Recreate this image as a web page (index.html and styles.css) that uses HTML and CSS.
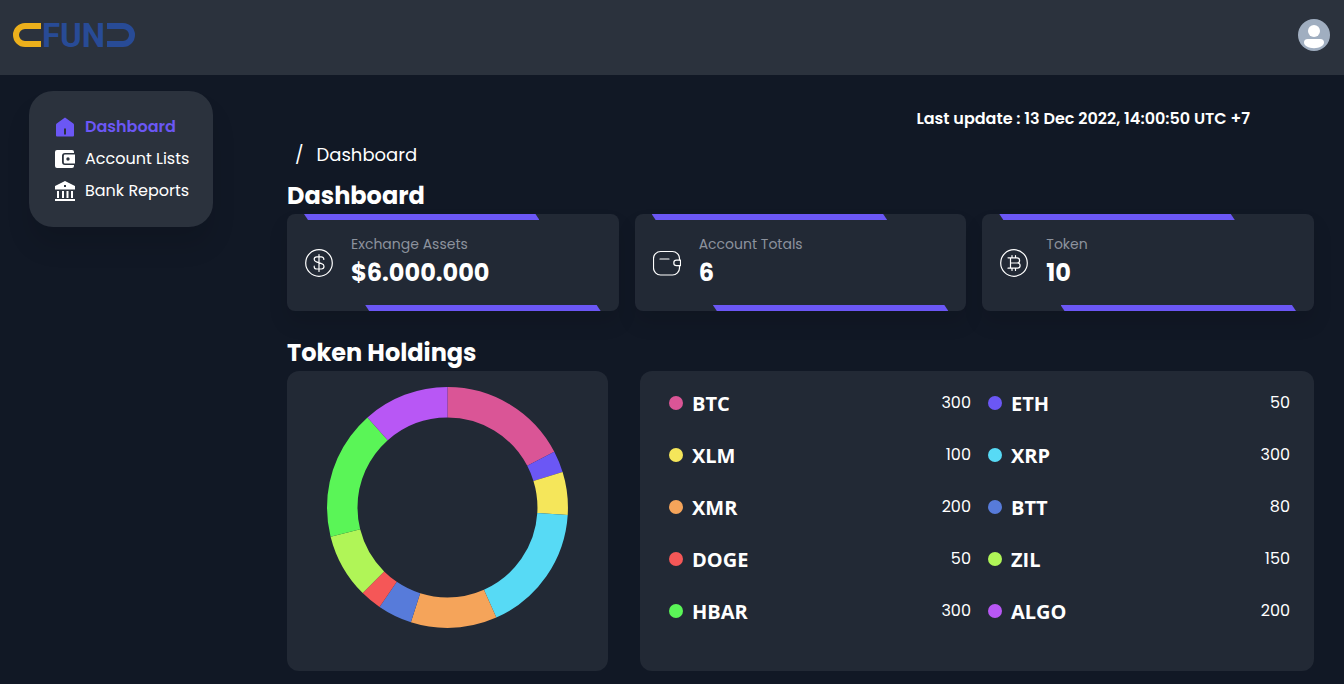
FILE: index.html
```html
<!DOCTYPE html>
<html lang="en">
<head>
<meta charset="utf-8">
<meta name="viewport" content="width=device-width, initial-scale=1">
<title>Dashboard</title>
<link rel="stylesheet" href="styles.css">
</head>
<body>
<header class="topbar">
  <a class="brand" href="#" aria-label="CFUND home">
    <svg class="logo" width="124" height="32" viewBox="0 -4 124 36">
      <path d="M28 9H12a9 9 0 0 0 0 18h16" transform="translate(0 -4)" fill="none" stroke="#ecb01c" stroke-width="6"/>
      <text class="brand-text" x="29" y="26">FUN</text>
      <path d="M94 5h16a9 9 0 0 1 0 18H94" fill="none" stroke="#284b96" stroke-width="6"/>
    </svg>
  </a>
  <button class="avatar" type="button" aria-label="Account">
    <svg width="32" height="32" viewBox="0 0 32 32">
      <circle cx="16" cy="16" r="16" fill="#a0aec0"/>
      <circle cx="16" cy="11.9" r="6" fill="#fff"/>
      <path d="M9.600 20h12.800a3.600 3.600 0 0 1 3.600 3.600c0 3.200-4.500 5.600-10 5.600S6 26.800 6 23.600A3.600 3.600 0 0 1 9.600 20z" fill="#fff"/>
    </svg>
  </button>
</header>
<div class="layout">
  <nav class="sidebar" aria-label="Main">
    <a class="nav-link active" href="#">
      <svg width="20" height="20" viewBox="0 0 20 20"><path fill="currentColor" fill-rule="evenodd" d="M10 .5 18.300 6.600Q19 7.100 19 8v10.500a1 1 0 0 1-1 1H2a1 1 0 0 1-1-1V8q0-.900.700-1.400zM9 11.500v6h2v-6z"/></svg>
      Dashboard
    </a>
    <a class="nav-link" href="#">
      <svg width="20" height="20" viewBox="0 0 20 20"><path fill="currentColor" d="M2 1h15a2 2 0 0 1 2 2v1h-9A3 3 0 0 0 7 7v6a3 3 0 0 0 3 3h9v1a2 2 0 0 1-2 2H2a2 2 0 0 1-2-2V3a2 2 0 0 1 2-2z"/><path fill="currentColor" fill-rule="evenodd" d="M10 5.500h10v9H10a1.200 1.200 0 0 1-1.200-1.200V6.700A1.200 1.200 0 0 1 10 5.500zM13 8.300a1.700 1.700 0 1 0 0 3.400 1.700 1.700 0 0 0 0-3.400z"/></svg>
      Account Lists
    </a>
    <a class="nav-link" href="#">
      <svg width="20" height="20" viewBox="0 0 20 20"><path fill="currentColor" fill-rule="evenodd" d="M10 0l10 5v3.500H0V5zM9 4v2h2V4zM2 10h2v7H2zM7 10h2v7H7zM11.500 10h2v7h-2zM16 10h2v7h-2zM0 18h20v2H0z"/></svg>
      Bank Reports
    </a>
  </nav>
  <main class="main">
    <p class="updated">Last update : 13 Dec 2022, 14:00:50 UTC +7</p>
    <nav class="breadcrumb" aria-label="Breadcrumb"><span>/</span><a href="#">Dashboard</a></nav>
    <h1 class="title">Dashboard</h1>
    <section class="stats">
      <article class="stat">
        <svg class="stat-icon" width="28" height="28" viewBox="0 0 28 28">
          <circle cx="14" cy="14" r="13.300"/>
          <path d="M14 5.500v17M18.800 10.500V10c0-1.400-1.100-2.200-2.500-2.200h-4.600c-1.400 0-2.500 1-2.500 2.500s.900 2.300 2.200 2.600l5.200 1.700c1.400.400 2.400 1.200 2.400 2.700s-1.100 2.700-2.500 2.700h-4.800c-1.400 0-2.500-.800-2.500-2.300v-.5"/>
        </svg>
        <div><h2 class="stat-label">Exchange Assets</h2><p class="stat-value">$6.000.000</p></div>
      </article>
      <article class="stat">
        <svg class="stat-icon" width="28" height="28" viewBox="0 0 28 28">
          <path d="M26.500 11V9.500a7 7 0 0 0-7-7H7.500a7 7 0 0 0-7 7V19a7 7 0 0 0 7 7h12a7 7 0 0 0 7-7v-2.500M7 10H16"/>
          <path d="M27.500 11.200H23.500a2.700 2.700 0 0 0 0 5.400h4z"/>
        </svg>
        <div><h2 class="stat-label">Account Totals</h2><p class="stat-value">6</p></div>
      </article>
      <article class="stat">
        <svg class="stat-icon" width="28" height="28" viewBox="0 0 28 28">
          <circle cx="14" cy="14" r="13.300"/>
          <path d="M8 8.800h9a2.600 2.600 0 0 1 0 5.200H10.500M17 14h.5a2.600 2.600 0 0 1 0 5.200H8M10.500 8.800v10.400M12 6.500v2.300M15.500 6.500v2.300M12 19.200v2.300M15.500 19.200v2.300"/>
        </svg>
        <div><h2 class="stat-label">Token</h2><p class="stat-value">10</p></div>
      </article>
    </section>
    <h2 class="title holdings-title">Token Holdings</h2>
    <section class="holdings">
      <div class="panel chart">
        <svg class="donut" viewBox="0 0 241 241" role="img" aria-label="Token holdings by amount">
          <g transform="rotate(-90 120.5 120.5)">
            <circle class="pink" cx="120.5" cy="120.5" r="105.25" pathLength="1730" stroke-dasharray="300 1430"/>
            <circle class="violet" cx="120.5" cy="120.5" r="105.25" pathLength="1730" stroke-dasharray="50 1680" stroke-dashoffset="-300"/>
            <circle class="yellow" cx="120.5" cy="120.5" r="105.25" pathLength="1730" stroke-dasharray="100 1630" stroke-dashoffset="-350"/>
            <circle class="cyan" cx="120.5" cy="120.5" r="105.25" pathLength="1730" stroke-dasharray="300 1430" stroke-dashoffset="-450"/>
            <circle class="orange" cx="120.5" cy="120.5" r="105.25" pathLength="1730" stroke-dasharray="200 1530" stroke-dashoffset="-750"/>
            <circle class="blue" cx="120.5" cy="120.5" r="105.25" pathLength="1730" stroke-dasharray="80 1650" stroke-dashoffset="-950"/>
            <circle class="red" cx="120.5" cy="120.5" r="105.25" pathLength="1730" stroke-dasharray="50 1680" stroke-dashoffset="-1030"/>
            <circle class="lime" cx="120.5" cy="120.5" r="105.25" pathLength="1730" stroke-dasharray="150 1580" stroke-dashoffset="-1080"/>
            <circle class="green" cx="120.5" cy="120.5" r="105.25" pathLength="1730" stroke-dasharray="300 1430" stroke-dashoffset="-1230"/>
            <circle class="purple" cx="120.5" cy="120.5" r="105.25" pathLength="1730" stroke-dasharray="200 1530" stroke-dashoffset="-1530"/>
          </g>
        </svg>
      </div>
      <ul class="panel tokens">
        <li class="token"><span class="dot pink"></span><b class="coin">BTC</b><span class="amount">300</span></li>
        <li class="token"><span class="dot violet"></span><b class="coin">ETH</b><span class="amount">50</span></li>
        <li class="token"><span class="dot yellow"></span><b class="coin">XLM</b><span class="amount">100</span></li>
        <li class="token"><span class="dot cyan"></span><b class="coin">XRP</b><span class="amount">300</span></li>
        <li class="token"><span class="dot orange"></span><b class="coin">XMR</b><span class="amount">200</span></li>
        <li class="token"><span class="dot blue"></span><b class="coin">BTT</b><span class="amount">80</span></li>
        <li class="token"><span class="dot red"></span><b class="coin">DOGE</b><span class="amount">50</span></li>
        <li class="token"><span class="dot lime"></span><b class="coin">ZIL</b><span class="amount">150</span></li>
        <li class="token"><span class="dot green"></span><b class="coin">HBAR</b><span class="amount">300</span></li>
        <li class="token"><span class="dot purple"></span><b class="coin">ALGO</b><span class="amount">200</span></li>
      </ul>
    </section>
  </main>
</div>
</body>
</html>
```
FILE: styles.css
```css
* { box-sizing: border-box; }
body {
  margin: 0;
  min-height: 100vh;
  background: #111825;
  color: #fff;
  font: 400 16px/24px Poppins, Inter, sans-serif;
}
h1, h2, p, ul { margin: 0; padding: 0; }
ul { list-style: none; }
a { color: inherit; text-decoration: none; }
svg { display: block; flex: none; }

.topbar {
  display: flex;
  align-items: center;
  justify-content: space-between;
  height: 75px;
  padding: 0 14px 5px 13px;
  background: #2b323d;
}
.logo { width: 124px; height: 36px; }
.brand-text { font: 700 33px/36px Roboto, sans-serif; fill: #284b96; }
.avatar { padding: 0; border: 0; border-radius: 50%; background: none; cursor: pointer; }

.layout { display: flex; align-items: flex-start; gap: 74px; padding: 0 30px 12px 29px; }
.sidebar {
  flex: none;
  width: 184px;
  margin-top: 16px;
  padding: 20px 16px 20px 26px;
  border-radius: 24px;
  background: #2b323d;
  box-shadow: 0 20px 25px rgba(0, 0, 0, .1);
}
.nav-link { display: flex; align-items: center; gap: 10px; height: 32px; white-space: nowrap; }
.nav-link.active { color: #6b57f5; font-weight: 600; }

.main { flex: 1; min-width: 0; padding-top: 32px; }
.updated { padding-right: 64px; text-align: right; font-weight: 600; }
.breadcrumb { display: flex; gap: 13px; margin: 10px 0 9px; padding-left: 8px; font-size: 18px; line-height: 28px; }
.title { font-size: 24px; line-height: 36px; font-weight: 700; }

.stats { display: grid; grid-template-columns: repeat(3, 1fr); gap: 16px; }
.stat {
  position: relative;
  display: flex;
  align-items: center;
  gap: 18px;
  padding: 20px 18px 19px;
  border-radius: 8px;
  background: #222935;
  box-shadow: 0 12px 20px rgba(0, 0, 0, .1);
}
.stat::before, .stat::after {
  content: "";
  position: absolute;
  width: 71%;
  height: 6px;
  background: #6b57f5;
  clip-path: polygon(0 0, calc(100% - 4px) 0, 100% 100%, 4px 100%);
}
.stat::before { top: 0; left: 17px; }
.stat::after { bottom: 0; right: 18px; }
.stat-icon { fill: none; stroke: #fff; stroke-width: 1.2; stroke-linecap: round; stroke-linejoin: round; }
.stat-label { font-size: 14px; line-height: 20px; font-weight: 400; color: #8c929d; }
.stat-value { font-size: 24px; line-height: 38px; font-weight: 700; }

.holdings-title { margin-top: 24px; }
.holdings { display: grid; grid-template-columns: 1fr 2.1fr; gap: 32px; }
.panel { min-height: 300px; border-radius: 12px; background: #222935; }
.chart { padding: 16px 40px; }
.donut { width: 100%; max-width: 241px; margin: 0 auto; }
.donut circle { fill: none; stroke: currentColor; stroke-width: 30.5; }
.tokens {
  display: grid;
  grid-template-columns: 1fr 1fr;
  align-content: start;
  gap: 20px 17px;
  padding: 16px 24px 16px 29px;
}
.token { display: flex; align-items: center; height: 32px; }
.dot { width: 14px; height: 14px; margin-right: 9px; border-radius: 50%; background: currentColor; }
.coin { padding-top: 2px; font: 700 20px/28px "Segoe UI", "Open Sans", sans-serif; }
.amount { margin-left: auto; }

.pink { color: #da5596; }
.violet { color: #6b57f5; }
.yellow { color: #f5e65a; }
.cyan { color: #57daf5; }
.orange { color: #f5a45a; }
.blue { color: #577bda; }
.red { color: #f55757; }
.lime { color: #b0f557; }
.green { color: #5af557; }
.purple { color: #b857f5; }
```
